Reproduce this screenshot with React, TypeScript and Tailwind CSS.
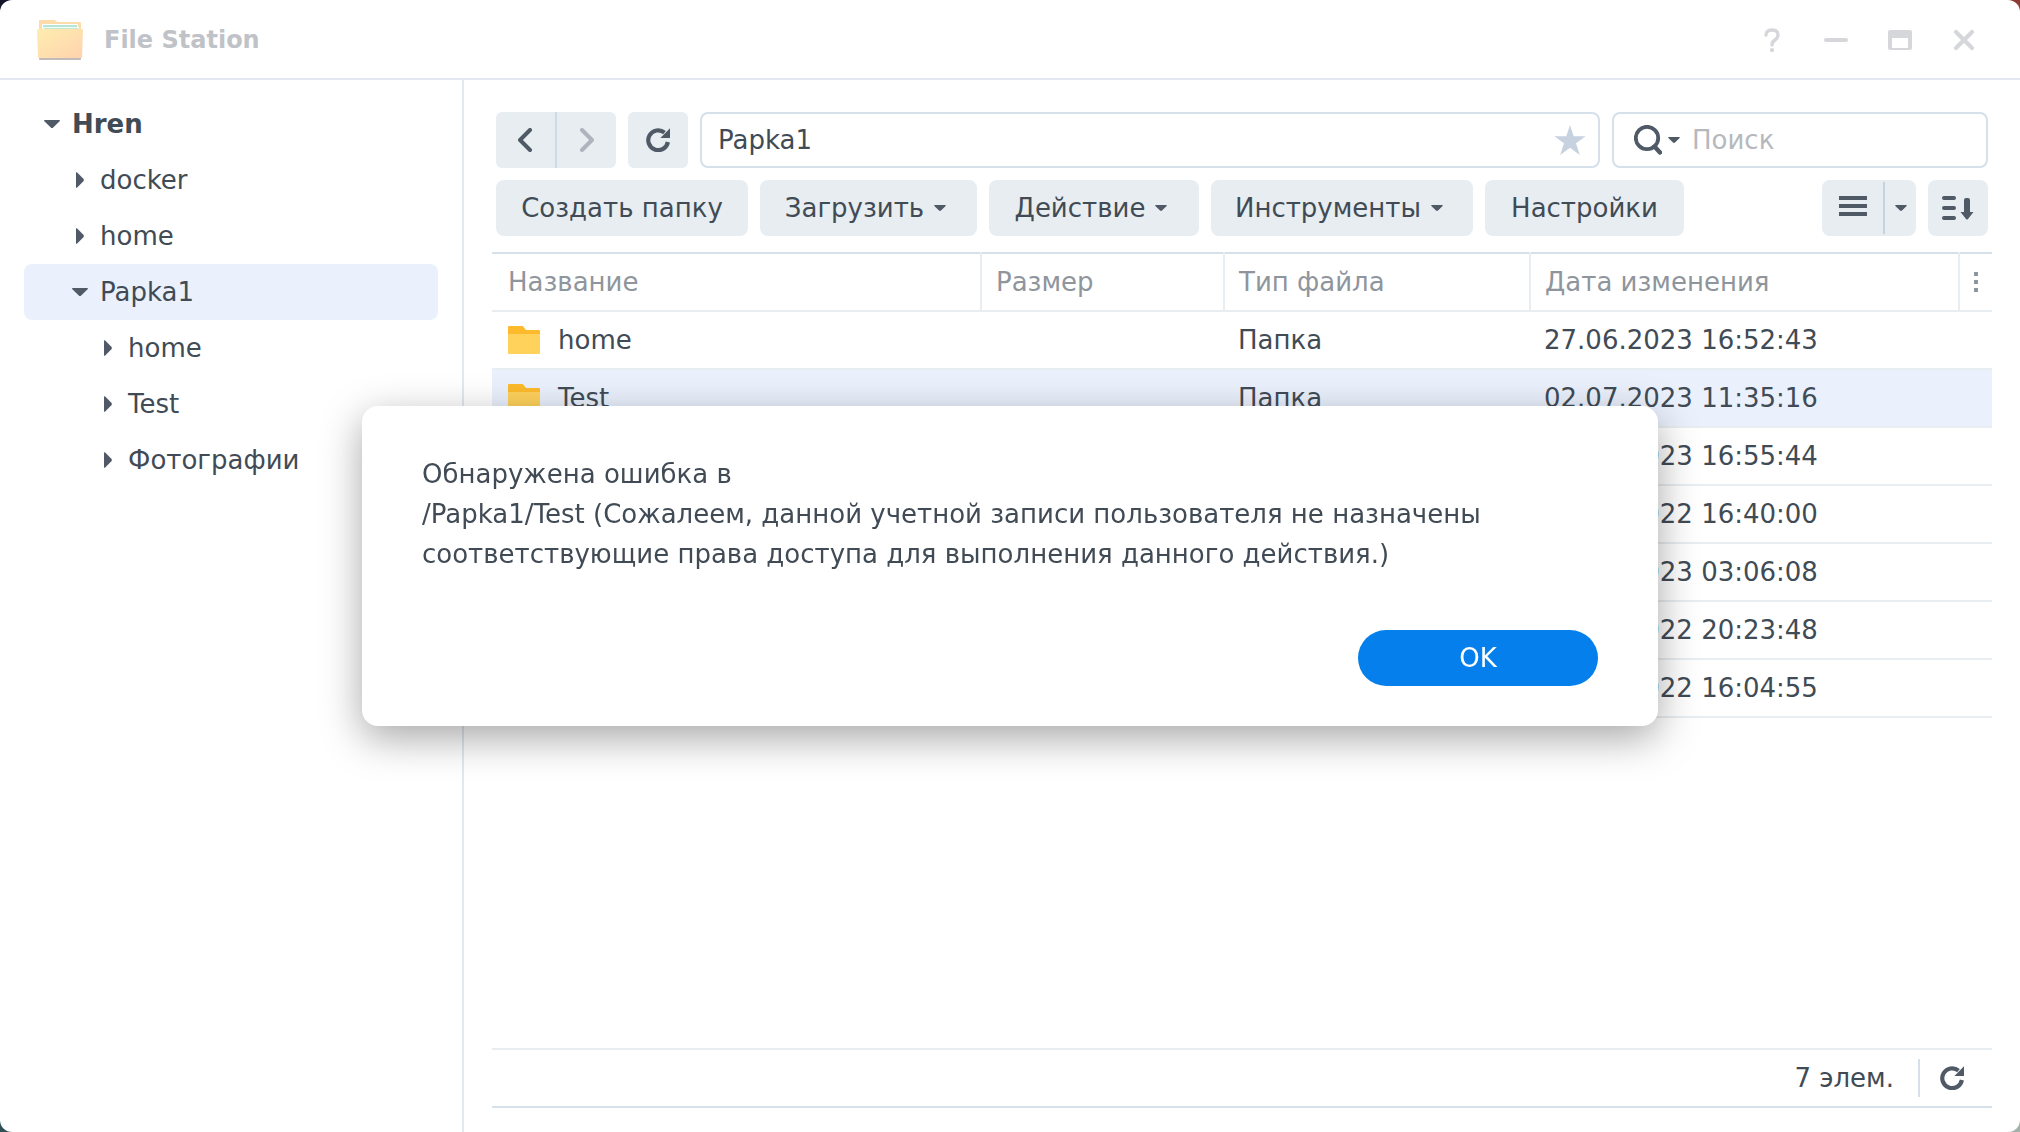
import React from "react";

const ink = "#505a66";

function Caret({ className = "" }: { className?: string }) {
  return (
    <svg viewBox="0 0 12 6" width="12" height="6" fill={ink} className={`shrink-0 ${className}`} aria-hidden="true">
      <path d="M0.4 0H11.6Q12 0.7 11.4 1.2L7 5.6Q6 6.3 5 5.6L0.6 1.2Q0 0.7 0.4 0Z" />
    </svg>
  );
}

function TreeArrow({ open }: { open?: boolean }) {
  return (
    <svg viewBox="0 0 16 16" width="16" height="16" fill={ink} className="shrink-0" aria-hidden="true">
      {open ? (
        <path d="M0.6 4H15.4Q16.2 4.6 15.6 5.2L9.2 11.4Q8 12.4 6.8 11.4L0.4 5.2Q-0.2 4.6 0.6 4Z" />
      ) : (
        <path d="M4 0.6Q4.6 -0.2 5.2 0.4L11.4 6.8Q12.4 8 11.4 9.2L5.2 15.6Q4.6 16.2 4 15.4Z" />
      )}
    </svg>
  );
}

function RefreshIcon() {
  return (
    <svg viewBox="0 0 24 24" width="24" height="24" fill="none" aria-hidden="true">
      <path d="M18.5 4.6A9.9 9.9 0 1 0 21.9 14" stroke={ink} strokeWidth="4.2" />
      <path d="M24 0.2V10H14.4Z" fill={ink} />
    </svg>
  );
}

function Chevron({ right }: { right?: boolean }) {
  return (
    <svg viewBox="0 0 16 24" width="16" height="24" fill="none" aria-hidden="true">
      <path
        d={right ? "M3 2L13 12L3 22" : "M12 2L2 12L12 22"}
        stroke={right ? "#aeb4bd" : ink}
        strokeWidth="4"
        strokeLinecap="round"
        strokeLinejoin="round"
      />
    </svg>
  );
}

function FolderIcon() {
  return (
    <svg viewBox="0 0 32 28" width="32" height="28" className="shrink-0" aria-hidden="true">
      <path d="M1 0H14Q15.2 0 16 1.4L18 4H31Q32 4 32 5V27H0V1Q0 0 1 0Z" fill="#fcba2c" />
      <path d="M0 8H32V27Q32 28 31 28H1Q0 28 0 27Z" fill="#ffd25c" />
    </svg>
  );
}

function AppIcon() {
  return (
    <svg viewBox="0 0 48 42" width="48" height="42" aria-hidden="true">
      <defs>
        <linearGradient id="front" x1="0" y1="0" x2="1" y2="1">
          <stop offset="0" stopColor="#feedb0" />
          <stop offset="0.5" stopColor="#fee0ae" />
          <stop offset="1" stopColor="#ffd2ae" />
        </linearGradient>
      </defs>
      <path d="M3 2Q3 1 4 1H18Q19 1 20 2L21 3H44Q45 3 45 4V20H3Z" fill="#fddcaa" />
      <path d="M6 5H42V16H6Z" fill="#ffffff" />
      <path d="M7 6H41V16H7Z" fill="#b5e5da" />
      <path d="M6 8H43V16H6Z" fill="#f4fbf4" />
      <path d="M8 9H42V16H8Z" fill="#c4ebd2" />
      <path d="M3 38H45V40Q45 41 44 41H4Q3 41 3 40Z" fill="#c3bbbb" />
      <path d="M2 10H46Q47 10 47 11L46 38Q46 39 45 39H3Q2 39 2 38L1 11Q1 10 2 10Z" fill="url(#front)" />
    </svg>
  );
}

const tree = [
  { name: "Hren", level: "pl-5", open: true, bold: true },
  { name: "docker", level: "pl-12" },
  { name: "home", level: "pl-12" },
  { name: "Papka1", level: "pl-12", open: true, selected: true },
  { name: "home", level: "pl-[76px]" },
  { name: "Test", level: "pl-[76px]" },
  { name: "Фотографии", level: "pl-[76px]" },
];

const files: { name?: string; type?: string; date: string; selected?: boolean }[] = [
  { name: "home", type: "Папка", date: "27.06.2023 16:52:43" },
  { name: "Test", type: "Папка", date: "02.07.2023 11:35:16", selected: true },
  { date: "27.06.2023 16:55:44" },
  { date: "27.06.2022 16:40:00" },
  { date: "27.06.2023 03:06:08" },
  { date: "27.06.2022 20:23:48" },
  { date: "27.06.2022 16:04:55" },
];

const actions = [
  { label: "Создать папку", width: "w-[252px]" },
  { label: "Загрузить", width: "w-[217px]", menu: true },
  { label: "Действие", width: "w-[210px]", menu: true },
  { label: "Инструменты", width: "w-[262px]", menu: true },
  { label: "Настройки", width: "w-[199px]" },
];

function TitleBar() {
  return (
    <header className="flex h-20 shrink-0 items-center border-b-2 border-[#e2e7f1] pt-0.5 pr-11 pl-9">
      <AppIcon />
      <h1 className="ml-5 flex-1 text-2xl font-bold text-[#bfc3c8]">File Station</h1>
      <div className="flex items-center gap-10 text-[#d5d7da]">
        <button aria-label="Справка" className="grid size-6 place-items-center">
          <svg viewBox="0 0 24 24" width="24" height="24" fill="none" aria-hidden="true">
            <path d="M6 7Q6 2 12 2Q18 2 18 7Q18 10 15 12Q12 14 12 17" stroke="currentColor" strokeWidth="3.4" strokeLinecap="round" />
            <circle cx="12" cy="22" r="2.1" fill="currentColor" />
          </svg>
        </button>
        <button aria-label="Свернуть" className="grid size-6 place-items-center">
          <svg viewBox="0 0 24 24" width="24" height="24" aria-hidden="true">
            <rect y="10" width="24" height="4" rx="2" fill="currentColor" />
          </svg>
        </button>
        <button aria-label="Развернуть" className="grid size-6 place-items-center">
          <svg viewBox="0 0 24 24" width="24" height="24" aria-hidden="true">
            <path fillRule="evenodd" d="M2 2H22Q24 2 24 4V20Q24 22 22 22H2Q0 22 0 20V4Q0 2 2 2ZM4 10V20H20V10Z" fill="currentColor" />
          </svg>
        </button>
        <button aria-label="Закрыть" className="grid size-6 place-items-center">
          <svg viewBox="0 0 24 24" width="24" height="24" aria-hidden="true">
            <path d="M4 4L20 20M20 4L4 20" stroke="currentColor" strokeWidth="4.2" strokeLinecap="round" />
          </svg>
        </button>
      </div>
    </header>
  );
}

function Sidebar() {
  return (
    <nav className="w-[464px] shrink-0 border-r-2 border-[#e2e7f1] px-6 pt-4">
      <ul>
        {tree.map((item, i) => (
          <li key={i}>
            <button
              className={`flex h-14 w-full items-center gap-3 rounded-lg text-left ${item.level} ${
                item.selected ? "bg-[#eaf1fd]" : ""
              } ${item.bold ? "font-bold" : ""}`}
            >
              <TreeArrow open={item.open} />
              {item.name}
            </button>
          </li>
        ))}
      </ul>
    </nav>
  );
}

function PathBar() {
  return (
    <div className="flex gap-3 px-1">
      <div className="flex h-14 w-[120px] shrink-0 overflow-hidden rounded-md bg-[#e8edf1]">
        <button aria-label="Назад" className="grid flex-1 place-items-center border-r-2 border-[#cddae6]">
          <Chevron />
        </button>
        <button aria-label="Вперёд" className="grid flex-1 place-items-center">
          <Chevron right />
        </button>
      </div>
      <button aria-label="Обновить" className="grid h-14 w-[60px] shrink-0 place-items-center rounded-md bg-[#e8edf1]">
        <RefreshIcon />
      </button>
      <div className="flex h-14 min-w-0 flex-1 items-center rounded-lg border-2 border-[#d5e0ea] pr-3 pl-4">
        <input aria-label="Путь" defaultValue="Papka1" className="min-w-0 flex-1 bg-transparent outline-none" />
        <button aria-label="В избранное">
          <svg viewBox="0 0 32 32" width="32" height="32" aria-hidden="true">
            <path d="M16 1L19.7 12.2H31.6L22 19.2L25.8 31L16 23.8L6.2 31L10 19.2L0.4 12.2H12.3Z" fill="#c6d2df" />
          </svg>
        </button>
      </div>
      <div className="flex h-14 w-[376px] shrink-0 items-center rounded-lg border-2 border-[#d5e0ea] px-5">
        <button aria-label="Параметры поиска" className="flex items-center gap-1.5">
          <svg viewBox="0 0 28 30" width="28" height="30" fill="none" stroke={ink} aria-hidden="true">
            <circle cx="13" cy="13" r="11.2" strokeWidth="3.8" />
            <path d="M20.5 21.5L26 27.5" strokeWidth="4.4" strokeLinecap="round" />
          </svg>
          <Caret />
        </button>
        <input
          aria-label="Поиск"
          placeholder="Поиск"
          className="ml-3 min-w-0 flex-1 bg-transparent outline-none placeholder:text-[#b5b9be]"
        />
      </div>
    </div>
  );
}

function Toolbar() {
  return (
    <div className="mt-3 flex gap-3 px-1">
      {actions.map((a) => (
        <button
          key={a.label}
          className={`flex h-14 items-center justify-center gap-2.5 rounded-lg bg-[#e8edf1] whitespace-nowrap ${a.width}`}
        >
          {a.label}
          {a.menu && <Caret className="mr-1.5" />}
        </button>
      ))}
      <div className="ml-auto flex h-14 w-[94px] items-center rounded-lg bg-[#e8edf1]">
        <button aria-label="Список" className="grid h-[52px] flex-1 place-items-center border-r-2 border-[#c8d2e0]">
          <svg viewBox="0 0 28 24" width="28" height="24" fill={ink} aria-hidden="true">
            <path d="M0 0H28V4H0ZM0 8H28V12H0ZM0 16H28V20H0Z" />
          </svg>
        </button>
        <button aria-label="Вид" className="grid h-14 w-[31px] place-items-center">
          <Caret />
        </button>
      </div>
      <button aria-label="Сортировка" className="grid h-14 w-[60px] place-items-center rounded-lg bg-[#e8edf1]">
        <svg viewBox="0 0 32 24" width="32" height="24" fill={ink} aria-hidden="true">
          <rect width="14" height="4" rx="2" />
          <rect y="10" width="14" height="4" rx="2" />
          <rect y="20" width="14" height="4" rx="2" />
          <path d="M22 4Q22 2 24 2H26Q28 2 28 4V16H31.5L26 23Q25 24 24 23L18.500 16H22Z" />
        </svg>
      </button>
    </div>
  );
}

function FileTable() {
  return (
    <table className="mt-4 w-full table-fixed border-t-2 border-[#d5e0ea] text-left">
      <colgroup>
        <col className="w-[489px]" />
        <col className="w-[243px]" />
        <col className="w-[306px]" />
        <col />
        <col className="w-[33px]" />
      </colgroup>
      <thead className="text-[#8f959c]">
        <tr className="h-[58px] border-b-2 border-[#e8edf1]">
          <th className="pl-4 font-normal">Название</th>
          <th className="border-l-2 border-[#e8edf1] pl-3.5 font-normal">Размер</th>
          <th className="border-l-2 border-[#e8edf1] pl-3.5 font-normal">Тип файла</th>
          <th className="border-l-2 border-[#e8edf1] pl-3.5 font-normal">Дата изменения</th>
          <th className="border-l-2 border-[#e8edf1] pl-3.5">
            <button aria-label="Столбцы" className="block">
              <svg viewBox="0 0 4 20" width="4" height="20" fill="#8f959c" aria-hidden="true">
                <path d="M0 0H4V4H0ZM0 8H4V12H0ZM0 16H4V20H0Z" />
              </svg>
            </button>
          </th>
        </tr>
      </thead>
      <tbody>
        {files.map((f, i) => (
          <tr key={i} className={`h-[58px] border-b-2 border-[#e8edf1] ${f.selected ? "bg-[#eaf1fd]" : ""}`}>
            <td className="pl-4">
              {f.name && (
                <span className="flex items-center gap-[18px]">
                  <FolderIcon />
                  {f.name}
                </span>
              )}
            </td>
            <td />
            <td className="pl-3.5">{f.type}</td>
            <td className="pl-3.5" colSpan={2}>
              {f.date}
            </td>
          </tr>
        ))}
      </tbody>
    </table>
  );
}

function ErrorDialog() {
  return (
    <div className="fixed inset-0 grid place-items-center">
      <div
        role="alertdialog"
        aria-modal="true"
        aria-describedby="error-text"
        className="flex w-full max-w-[1296px] flex-col rounded-2xl bg-white px-[60px] pt-12 pb-10 shadow-[0_12px_40px_rgba(0,0,0,0.35)]"
      >
        <p id="error-text" className="min-h-[176px] leading-10">
          Обнаружена ошибка в
          <br />
          /Papka1/Test (Сожалеем, данной учетной записи пользователя не назначены соответствующие права доступа для
          выполнения данного действия.)
        </p>
        <button className="h-14 w-60 self-end rounded-full bg-[#057feb] text-white">OK</button>
      </div>
    </div>
  );
}

export default function App() {
  return (
    <div className="flex min-h-screen flex-col bg-[linear-gradient(90deg,#14142a,#8b3a32),linear-gradient(90deg,#2f4f52,#a3b0aa)] bg-[length:100%_50%] bg-[position:top,bottom] bg-no-repeat font-['DejaVu_Sans',sans-serif] text-[26px] leading-[34px] text-[#414b55]">
      <div className="flex flex-1 flex-col rounded-xl bg-white">
        <TitleBar />
        <div className="flex flex-1">
          <Sidebar />
          <main className="flex min-w-0 flex-1 flex-col px-7 pt-8 pb-6">
            <PathBar />
            <Toolbar />
            <FileTable />
            <footer className="mt-auto flex h-15 items-center justify-end border-y-2 border-t-[#e8edf1] border-b-[#d5e0ea] pr-7">
              <span>7 элем.</span>
              <span className="mr-5 ml-6 h-[38px] w-0.5 bg-[#d5e0ea]" />
              <button aria-label="Обновить список">
                <RefreshIcon />
              </button>
            </footer>
          </main>
        </div>
      </div>
      <ErrorDialog />
    </div>
  );
}
